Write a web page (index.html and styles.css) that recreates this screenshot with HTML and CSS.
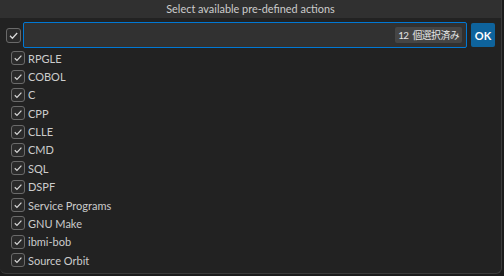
FILE: index.html
```html
<html>
<head>
  <title>Select available pre-defined actions</title>
  <link rel="stylesheet" href="styles.css">
</head>
<body>
  <div class="quick-input">
    <div class="title">Select available pre-defined actions</div>
    <div class="header">
      <span class="check big"><svg viewBox="0 0 13 13"><polyline points="3,6.8 5.4,9.2 10.2,4"/></svg></span>
      <div class="input-box">
        <span class="badge">12 個選択済み</span>
      </div>
      <button class="ok">OK</button>
    </div>
    <ul class="list">
      <li><span class="check"><svg viewBox="0 0 13 13"><polyline points="3,6.8 5.4,9.2 10.2,4"/></svg></span>RPGLE</li>
      <li><span class="check"><svg viewBox="0 0 13 13"><polyline points="3,6.8 5.4,9.2 10.2,4"/></svg></span>COBOL</li>
      <li><span class="check"><svg viewBox="0 0 13 13"><polyline points="3,6.8 5.4,9.2 10.2,4"/></svg></span>C</li>
      <li><span class="check"><svg viewBox="0 0 13 13"><polyline points="3,6.8 5.4,9.2 10.2,4"/></svg></span>CPP</li>
      <li><span class="check"><svg viewBox="0 0 13 13"><polyline points="3,6.8 5.4,9.2 10.2,4"/></svg></span>CLLE</li>
      <li><span class="check"><svg viewBox="0 0 13 13"><polyline points="3,6.8 5.4,9.2 10.2,4"/></svg></span>CMD</li>
      <li><span class="check"><svg viewBox="0 0 13 13"><polyline points="3,6.8 5.4,9.2 10.2,4"/></svg></span>SQL</li>
      <li><span class="check"><svg viewBox="0 0 13 13"><polyline points="3,6.8 5.4,9.2 10.2,4"/></svg></span>DSPF</li>
      <li><span class="check"><svg viewBox="0 0 13 13"><polyline points="3,6.8 5.4,9.2 10.2,4"/></svg></span>Service Programs</li>
      <li><span class="check"><svg viewBox="0 0 13 13"><polyline points="3,6.8 5.4,9.2 10.2,4"/></svg></span>GNU Make</li>
      <li><span class="check"><svg viewBox="0 0 13 13"><polyline points="3,6.8 5.4,9.2 10.2,4"/></svg></span>ibmi-bob</li>
      <li><span class="check"><svg viewBox="0 0 13 13"><polyline points="3,6.8 5.4,9.2 10.2,4"/></svg></span>Source Orbit</li>
    </ul>
  </div>
</body>
</html>
```

FILE: styles.css
```css
body {
  margin: 0;
  background-color: #1b1b1b;
  font-family: Lato, "Noto Sans CJK JP", sans-serif;
  font-size: 11px;
  color: #cccccc;
}
.quick-input {
  width: 501px;
  height: 273px;
  background-color: #222222;
  border-right: 1px solid #3a3a3a;
  border-bottom: 1px solid #3a3a3a;
  border-radius: 0 0 6px 6px;
  overflow: hidden;
}
.title {
  height: 18px;
  line-height: 18px;
  text-align: center;
  background-color: #303030;
  font-size: 10.9px;
}
.header {
  display: flex;
  align-items: center;
  padding: 4px 6px 0 6px;
  height: 26px;
}
.check {
  width: 12px;
  height: 12px;
  border: 1px solid #6a6a6a;
  border-radius: 3px;
  background-color: #2a2a2a;
  display: inline-flex;
  flex-shrink: 0;
}
.check.big {
  width: 13px;
  height: 13px;
}
.check svg {
  width: 100%;
  height: 100%;
  fill: none;
  stroke: #d8d8d8;
  stroke-width: 1.3;
}
.input-box {
  flex: 1;
  height: 24px;
  margin-left: 2px;
  border: 1px solid #0078d4;
  border-radius: 2px;
  background-color: #313131;
  display: flex;
  align-items: center;
  justify-content: flex-end;
  padding-right: 4px;
}
.badge {
  background-color: #454545;
  border-radius: 2px;
  padding: 0 3px;
  height: 16px;
  line-height: 16px;
  font-size: 9.8px;
  letter-spacing: -0.5px;
  word-spacing: 2px;
  color: #e6e6e6;
}
.ok {
  width: 24px;
  height: 24px;
  margin-left: 4px;
  border: none;
  border-radius: 2px;
  background-color: #0e639c;
  color: #ffffff;
  font-family: Lato, sans-serif;
  font-size: 11px;
  font-weight: bold;
  padding: 0;
}
.list {
  list-style: none;
  margin: 1px 0 0 0;
  padding: 0 0 0 11px;
}
.list li {
  height: 18.36px;
  display: flex;
  align-items: center;
}
.list .check {
  margin-right: 3px;
}
```
